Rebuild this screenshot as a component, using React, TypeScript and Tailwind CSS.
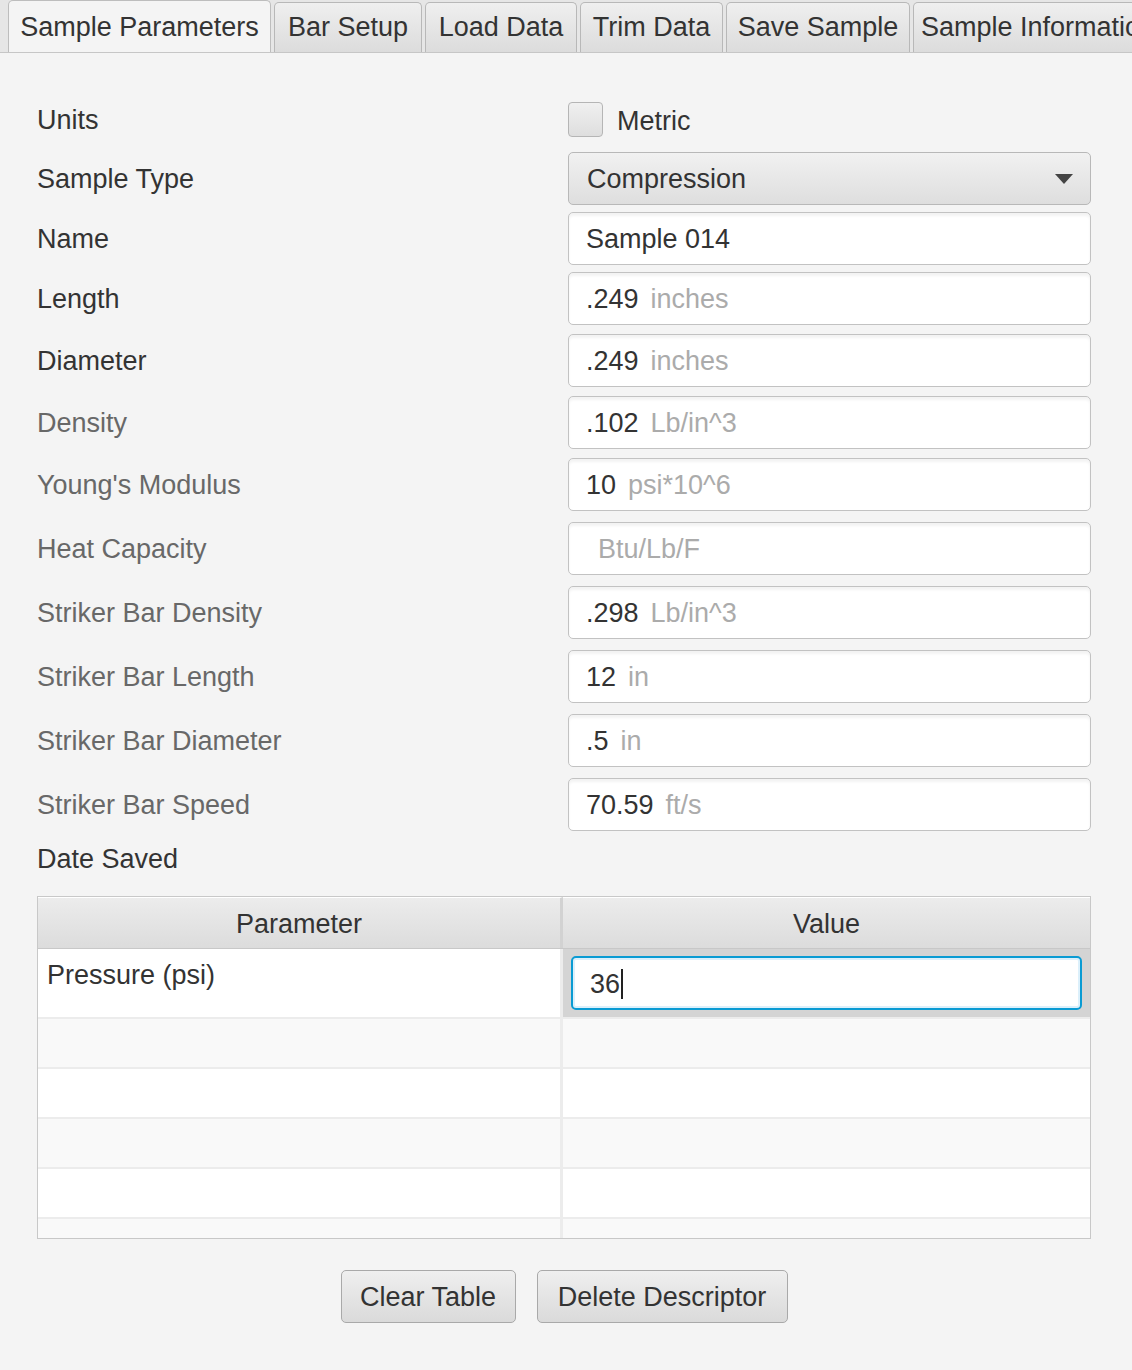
import React from "react";

interface FieldRow {
  label: string;
  dark: boolean;
  value: string;
  unit: string;
  gap: string;
}

const tabs = [
  { name: "Sample Parameters", width: "w-[263px]", selected: true },
  { name: "Bar Setup", width: "w-[148px]", selected: false },
  { name: "Load Data", width: "w-[152px]", selected: false },
  { name: "Trim Data", width: "w-[143px]", selected: false },
  { name: "Save Sample", width: "w-[184px]", selected: false },
  { name: "Sample Information", width: "w-[250px]", selected: false },
];

const fields: FieldRow[] = [
  { label: "Name", dark: true, value: "Sample 014", unit: "", gap: "mt-[7px]" },
  { label: "Length", dark: true, value: ".249", unit: "inches", gap: "mt-[7px]" },
  { label: "Diameter", dark: true, value: ".249", unit: "inches", gap: "mt-[9px]" },
  { label: "Density", dark: false, value: ".102", unit: "Lb/in^3", gap: "mt-[9px]" },
  { label: "Young's Modulus", dark: false, value: "10", unit: "psi*10^6", gap: "mt-[9px]" },
  { label: "Heat Capacity", dark: false, value: "", unit: "Btu/Lb/F", gap: "mt-[11px]" },
  { label: "Striker Bar Density", dark: false, value: ".298", unit: "Lb/in^3", gap: "mt-[11px]" },
  { label: "Striker Bar Length", dark: false, value: "12", unit: "in", gap: "mt-[11px]" },
  { label: "Striker Bar Diameter", dark: false, value: ".5", unit: "in", gap: "mt-[11px]" },
  { label: "Striker Bar Speed", dark: false, value: "70.59", unit: "ft/s", gap: "mt-[11px]" },
];

const TextField: React.FC<{ value: string; unit: string }> = ({ value, unit }) => (
  <div className="flex h-[53px] w-[523px] items-center rounded-[5px] border border-[#c2c2c2] bg-white pl-[17px] pt-[2px] shadow-[inset_0_3px_3px_rgba(0,0,0,0.05)]">
    {value && <span className="text-[#333333]">{value}</span>}
    {unit && <span className="ml-[12px] text-[#ababab]">{unit}</span>}
  </div>
);

const App: React.FC = () => {
  return (
    <div className="min-h-[1370px] w-[1132px] overflow-hidden bg-[#f4f4f4] font-['Liberation_Sans',Arial,sans-serif] text-[27px] leading-none text-[#333333]">
      {/* tab strip */}
      <div className="flex h-[53px] items-end gap-[3px] overflow-hidden border-b border-[#c6c6c6] bg-[#e6e6e6] pl-[8px]">
        {tabs.map((t) =>
          t.selected ? (
            <div
              key={t.name}
              className={`${t.width} relative -mb-px flex h-[53px] shrink-0 items-center justify-center rounded-t-[5px] border border-b-0 border-[#bdbdbd] bg-[#f4f4f4] whitespace-nowrap`}
            >
              {t.name}
            </div>
          ) : (
            <div
              key={t.name}
              className={`${t.width} flex h-[50px] shrink-0 items-center justify-center rounded-t-[5px] border border-b-0 border-[#b8b8b8] bg-gradient-to-b from-[#efefef] to-[#dcdcdc] whitespace-nowrap`}
            >
              {t.name}
            </div>
          )
        )}
      </div>

      <div className="flex flex-col pl-[37px] pr-[41px]">
        {/* Units */}
        <div className="mt-[49px] flex h-[35px] items-center">
          <div className="w-[531px] pt-[1px]">Units</div>
          <div className="h-[35px] w-[35px] rounded-[4px] border border-[#b5b5b5] bg-gradient-to-b from-[#f0f0f0] to-[#dedede]" />
          <span className="ml-[14px] pt-[4px]">Metric</span>
        </div>

        {/* Sample Type */}
        <div className="mt-[15px] flex h-[53px] items-center">
          <div className="w-[531px] pt-[2px]">Sample Type</div>
          <div className="flex h-[53px] w-[523px] items-center justify-between rounded-[5px] border border-[#b8b8b8] bg-gradient-to-b from-[#f1f1f1] to-[#dedede] pl-[18px] pr-[17px]">
            <span className="pt-[2px]">Compression</span>
            <svg width="18" height="10" viewBox="0 0 18 10">
              <path d="M0 0 L18 0 L9 10 Z" fill="#444444" />
            </svg>
          </div>
        </div>

        {fields.map((f) => (
          <div key={f.label} className={`${f.gap} flex h-[53px] items-center`}>
            <div className={`w-[531px] pt-[2px] ${f.dark ? "text-[#333333]" : "text-[#686868]"}`}>{f.label}</div>
            <TextField value={f.value} unit={f.unit} />
          </div>
        ))}

        {/* Date Saved */}
        <div className="mt-[13px] flex h-[30px] items-center">Date Saved</div>

        {/* table */}
        <div className="mt-[22px] w-[1054px] border border-[#c8c8c8] bg-white">
          <div className="grid grid-cols-[525px_1fr] border-b border-[#c8c8c8]">
            <div className="flex h-[51px] items-center justify-center border-r-[3px] border-t border-[#d2d2d2] border-t-white bg-gradient-to-b from-[#ececec] to-[#dcdcdc] pt-[2px]">
              Parameter
            </div>
            <div className="flex h-[51px] items-center justify-center border-t border-t-white bg-gradient-to-b from-[#ececec] to-[#dcdcdc] pt-[2px]">
              Value
            </div>
          </div>
          <div className="h-[289px] overflow-hidden">
            <div className="grid h-[70px] grid-cols-[525px_1fr] border-b-2 border-[#ececec]">
              <div className="border-r-[3px] border-[#ececec] bg-white pl-[9px] pt-[13px]">Pressure (psi)</div>
              <div className="flex items-center bg-[#d4d4d4] px-[8px]">
                <div className="flex h-[54px] w-full items-center rounded-[5px] border-2 border-[#0a9bd3] bg-white pl-[17px] pt-[2px] shadow-[inset_0_0_0_2px_#dcf0fb]">
                  <span>36</span>
                  <span className="ml-px h-[30px] w-[2px] bg-[#222222]" />
                </div>
              </div>
            </div>
            {[1, 2, 3, 4, 5].map((i) => (
              <div
                key={i}
                className={`grid h-[50px] grid-cols-[525px_1fr] border-b-2 border-[#ececec] ${i % 2 === 1 ? "bg-[#f9f9f9]" : "bg-white"}`}
              >
                <div className="border-r-[3px] border-[#ececec]" />
                <div />
              </div>
            ))}
          </div>
        </div>

        {/* buttons */}
        <div className="mt-[31px] flex justify-center gap-[21px]">
          <button className="flex h-[53px] w-[175px] items-center justify-center rounded-[5px] border border-[#a9a9a9] bg-gradient-to-b from-[#efefef] to-[#dadada] pt-[2px] text-[#333333]">
            Clear Table
          </button>
          <button className="flex h-[53px] w-[251px] items-center justify-center rounded-[5px] border border-[#a9a9a9] bg-gradient-to-b from-[#efefef] to-[#dadada] pt-[2px] text-[#333333]">
            Delete Descriptor
          </button>
        </div>
      </div>
    </div>
  );
};

export default App;
